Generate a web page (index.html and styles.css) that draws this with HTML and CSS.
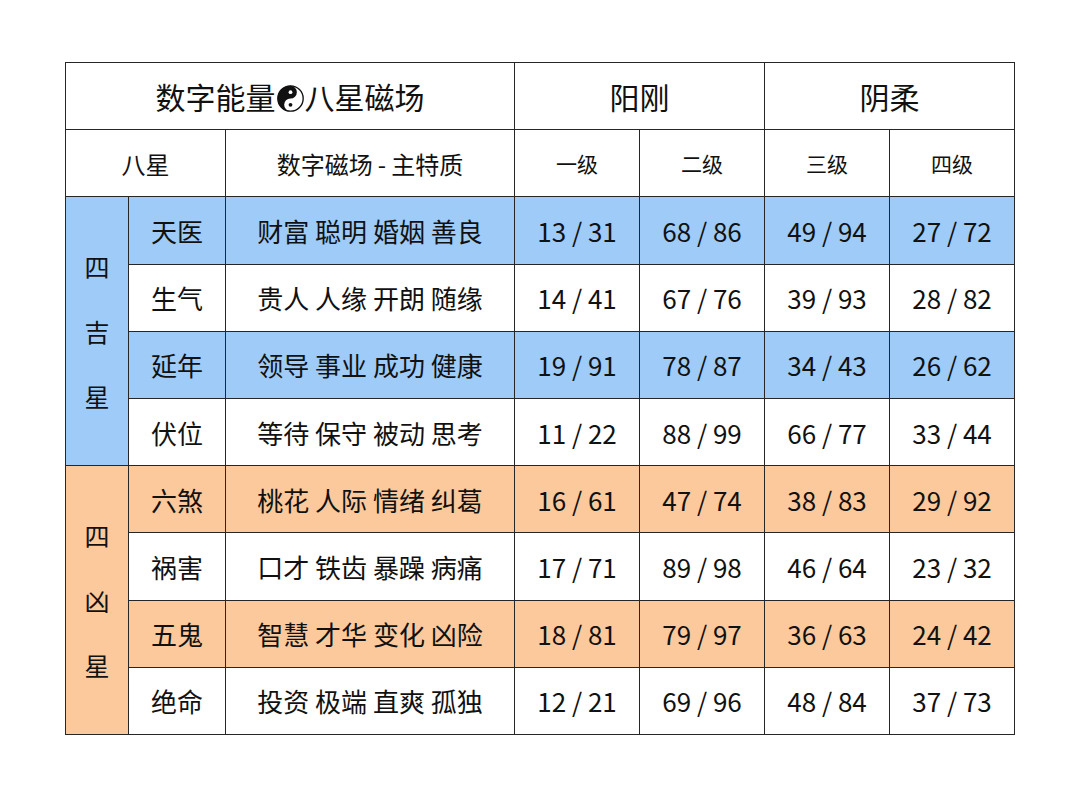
FILE: index.html
```html
<!DOCTYPE html>
<html lang="zh">
<head>
<meta charset="utf-8">
<link rel="stylesheet" href="styles.css">
</head>
<body>
<div class="page">
<table class="star">
<colgroup>
<col class="c-grp"><col class="c-name"><col class="c-trait">
<col class="c-lv"><col class="c-lv"><col class="c-lv"><col class="c-lv">
</colgroup>
<tr class="h1">
<th colspan="3">数字能量<svg class="yy" viewBox="0 0 100 100"><circle cx="50" cy="50" r="47" fill="#fff" stroke="#111" stroke-width="5"/><path d="M50,3 A47,47 0 0 0 50,97 A23.5,23.5 0 0 1 50,50 A23.5,23.5 0 0 0 50,3 Z" fill="#111"/><circle cx="50" cy="26.5" r="7" fill="#fff"/><circle cx="50" cy="73.5" r="7" fill="#111"/></svg>八星磁场</th>
<th colspan="2">阳刚</th>
<th colspan="2">阴柔</th>
</tr>
<tr class="h2">
<th colspan="2" class="big">八星</th>
<th class="big">数字磁场<span class="dash">-</span>主特质</th>
<th>一级</th><th>二级</th><th>三级</th><th>四级</th>
</tr>
<tr class="blue">
<td rowspan="4" class="grp g-blue"><span>四</span><span>吉</span><span>星</span></td>
<td>天医</td><td>财富 聪明 婚姻 善良</td><td>13 / 31</td><td>68 / 86</td><td>49 / 94</td><td>27 / 72</td>
</tr>
<tr>
<td>生气</td><td>贵人 人缘 开朗 随缘</td><td>14 / 41</td><td>67 / 76</td><td>39 / 93</td><td>28 / 82</td>
</tr>
<tr class="blue">
<td>延年</td><td>领导 事业 成功 健康</td><td>19 / 91</td><td>78 / 87</td><td>34 / 43</td><td>26 / 62</td>
</tr>
<tr>
<td>伏位</td><td>等待 保守 被动 思考</td><td>11 / 22</td><td>88 / 99</td><td>66 / 77</td><td>33 / 44</td>
</tr>
<tr class="orange">
<td rowspan="4" class="grp g-orange"><span>四</span><span>凶</span><span>星</span></td>
<td>六煞</td><td>桃花 人际 情绪 纠葛</td><td>16 / 61</td><td>47 / 74</td><td>38 / 83</td><td>29 / 92</td>
</tr>
<tr>
<td>祸害</td><td>口才 铁齿 暴躁 病痛</td><td>17 / 71</td><td>89 / 98</td><td>46 / 64</td><td>23 / 32</td>
</tr>
<tr class="orange">
<td>五鬼</td><td>智慧 才华 变化 凶险</td><td>18 / 81</td><td>79 / 97</td><td>36 / 63</td><td>24 / 42</td>
</tr>
<tr>
<td>绝命</td><td>投资 极端 直爽 孤独</td><td>12 / 21</td><td>69 / 96</td><td>48 / 84</td><td>37 / 73</td>
</tr>
</table>
</div>
</body>
</html>
```

FILE: styles.css
```css
html, body {
  margin: 0;
  padding: 0;
  background: #fff;
}
.page {
  padding: 62px 0 0 65px;
  font-family: "Noto Sans CJK SC", "Noto Sans", sans-serif;
  color: #111;
}
.star {
  border-collapse: collapse;
  table-layout: fixed;
  width: 949px;
}
.c-grp { width: 63px; }
.c-name { width: 97px; }
.c-trait { width: 289px; }
.c-lv { width: 125px; }
.star th, .star td {
  border: 1px solid #262626;
  height: 66.2px;
  padding: 0;
  text-align: center;
  vertical-align: middle;
  font-weight: 400;
  white-space: nowrap;
}
.star td {
  font-size: 26px;
}
.h1 th {
  font-size: 30px;
}
.h2 th {
  font-size: 21px;
}
.h2 th.big {
  font-size: 24px;
}
.dash {
  margin: 0 5px;
}
.yy {
  width: 27px;
  height: 27px;
  vertical-align: -3px;
  margin: 0 1px;
}
.blue td { background: #9ecbf8; }
.orange td { background: #fbc99c; }
.g-blue { background: #9ecbf8; }
.g-orange { background: #fbc99c; }
.grp span {
  display: block;
  font-size: 25px;
  line-height: 65px;
}
```
